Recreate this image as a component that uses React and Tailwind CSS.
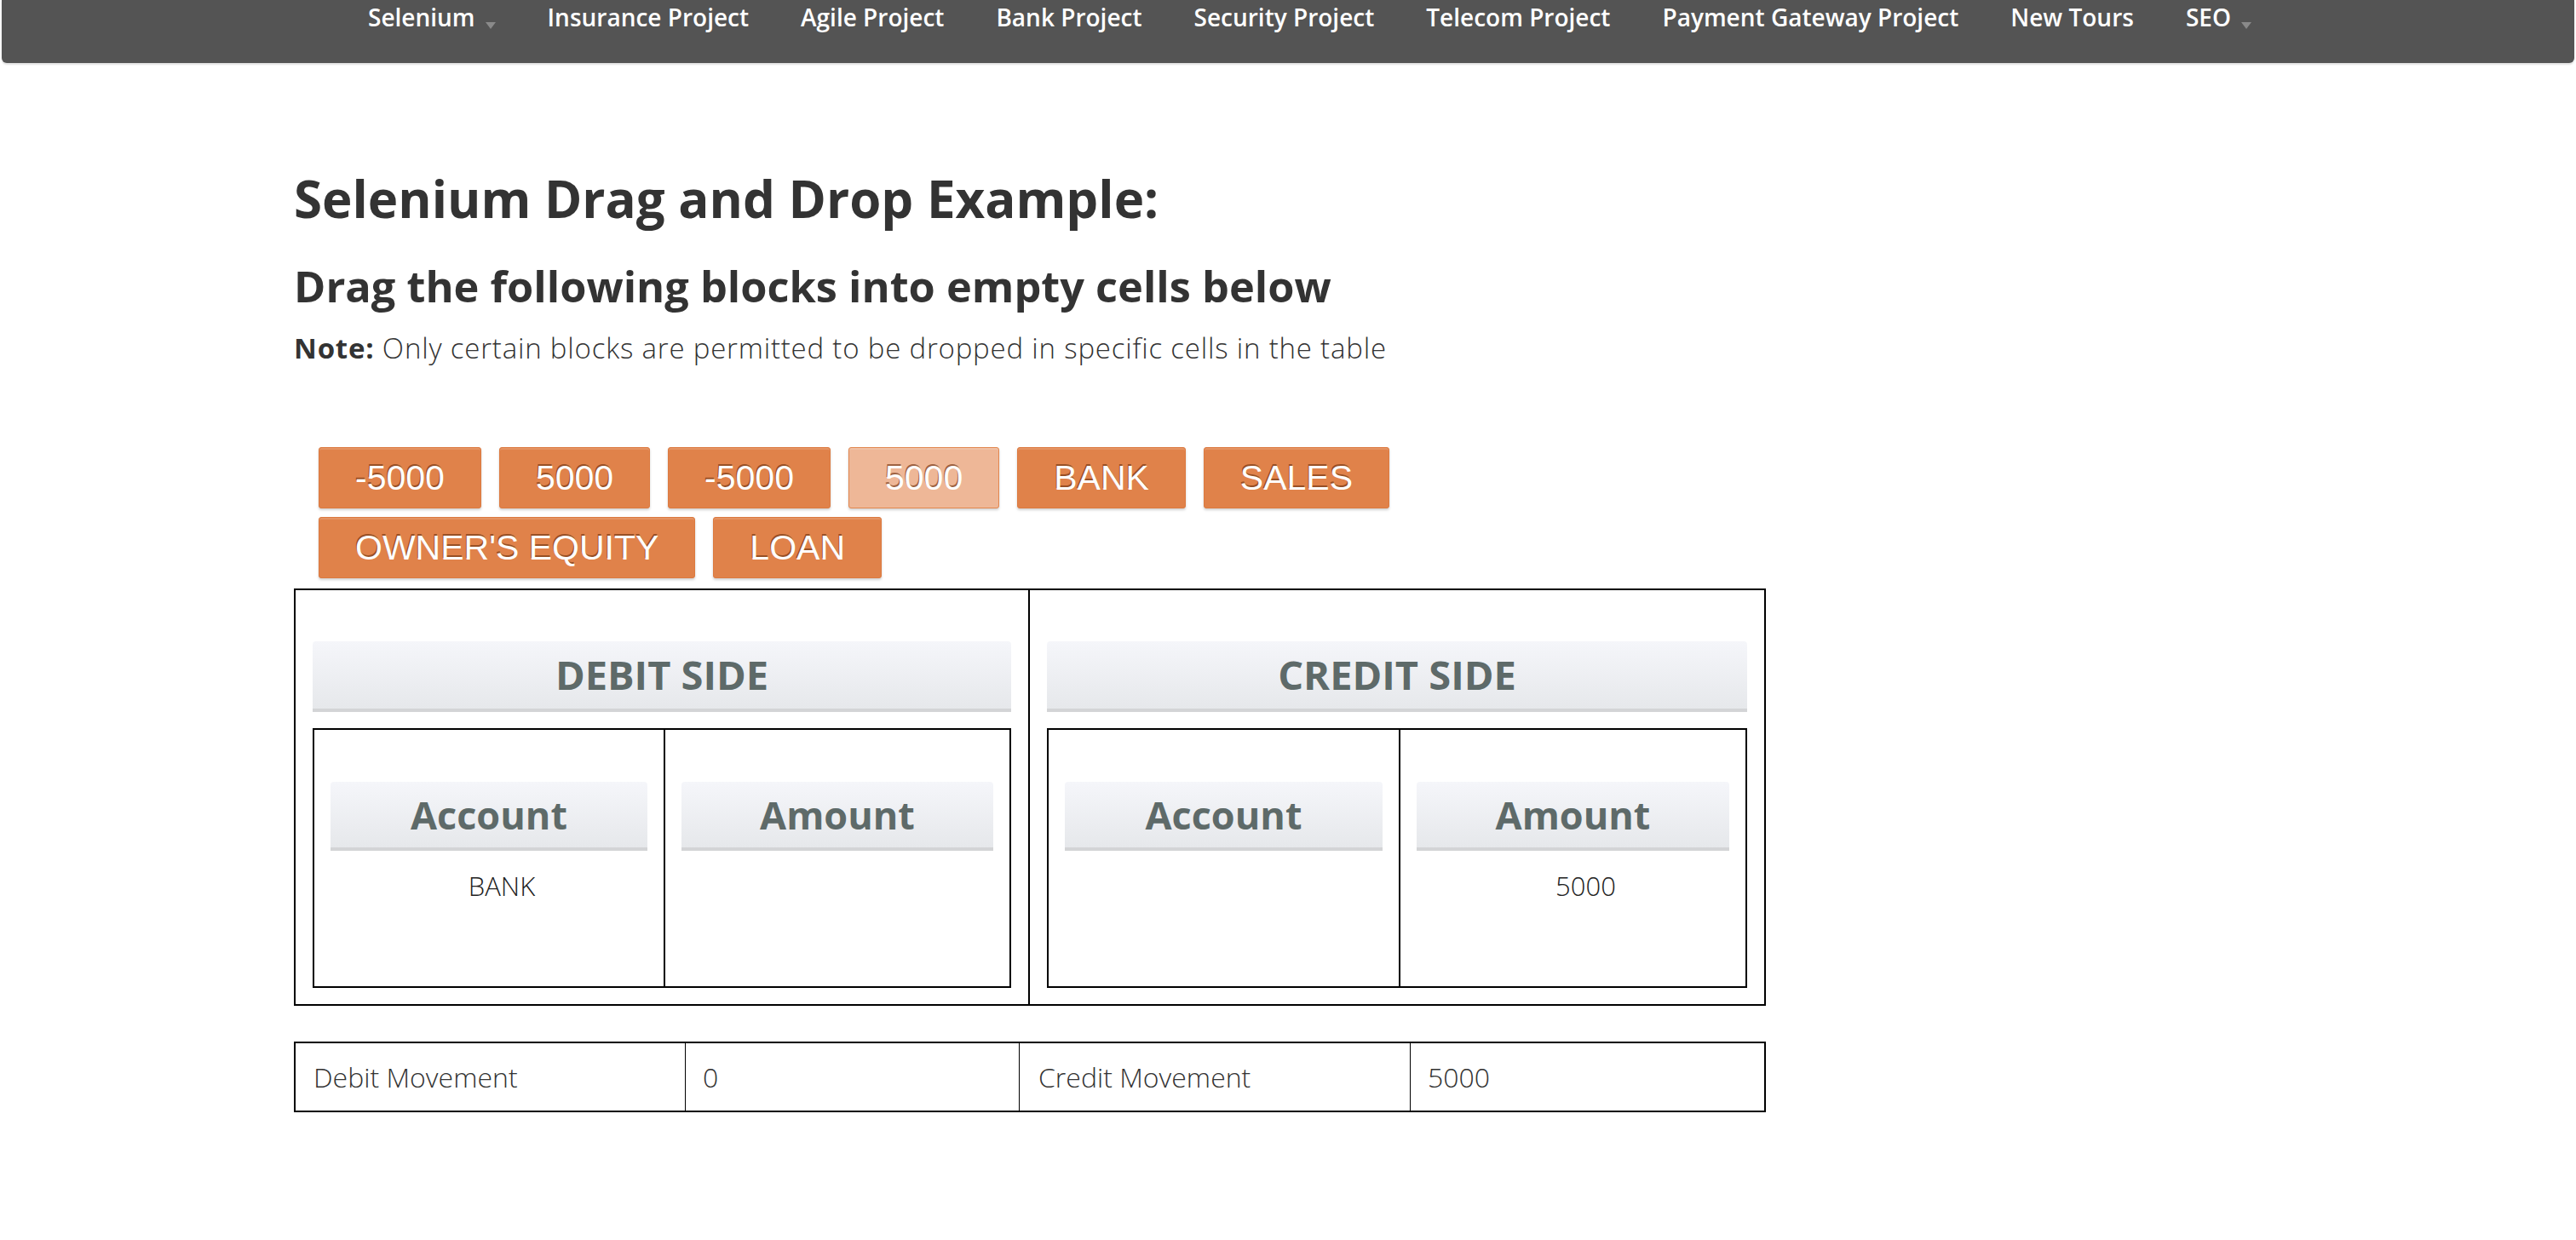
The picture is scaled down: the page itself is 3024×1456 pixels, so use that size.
const navItems = [
  { label: 'Selenium', caret: true },
  { label: 'Insurance Project' },
  { label: 'Agile Project' },
  { label: 'Bank Project' },
  { label: 'Security Project' },
  { label: 'Telecom Project' },
  { label: 'Payment Gateway Project' },
  { label: 'New Tours' },
  { label: 'SEO', caret: true },
];

const rowOne = [
  { label: '-5000' },
  { label: '5000' },
  { label: '-5000' },
  { label: '5000', used: true },
  { label: 'BANK' },
  { label: 'SALES' },
];

const rowTwo = [{ label: "OWNER'S EQUITY" }, { label: 'LOAN' }];

function Block({ label, used }) {
  return (
    <div
      className={
        'flex h-[72px] items-center rounded-[3px] border px-[42px] font-["Liberation_Sans",Arial,sans-serif] text-[41px] leading-none text-white [text-shadow:-1px_-2px_0_rgba(110,50,15,0.65)] shadow-[inset_0_2px_0_rgba(255,255,255,0.14),0_2px_3px_rgba(0,0,0,0.18)] ' +
        (used ? 'border-[#e2874f] bg-[#eeb797]' : 'border-[#dc7a40] bg-[#e0824a]')
      }
    >
      {label}
    </div>
  );
}

function SideHeader({ children }) {
  return (
    <div className="flex h-[83px] items-center justify-center rounded-t-[4px] border-b-[4px] border-[#d3d4d6] bg-linear-to-b from-[#f5f6fa] to-[#e6e8eb] text-[47px] font-bold text-[#5e6a69]">
      {children}
    </div>
  );
}

function ColHeader({ children }) {
  return (
    <div className="flex h-[81px] items-center justify-center rounded-t-[4px] border-b-[4px] border-[#d3d4d6] bg-linear-to-b from-[#f5f6fa] to-[#e6e8eb] text-[45px] font-bold text-[#5e6a69]">
      {children}
    </div>
  );
}

function DropCell({ title, value, last }) {
  return (
    <div className={'px-[19px] pt-[61px] ' + (last ? '' : 'border-r-2 border-black')}>
      <ColHeader>{title}</ColHeader>
      {value && (
        <ul className="mt-[20px] pl-[30px] text-center text-[31px] font-light leading-[42px] text-[#222]">
          <li>{value}</li>
        </ul>
      )}
    </div>
  );
}

function Side({ title, account, amount, last }) {
  return (
    <div className={'px-[20px] pb-[19px] pt-[60px] ' + (last ? '' : 'border-r-2 border-black')}>
      <SideHeader>{title}</SideHeader>
      <div className="mt-[19px] grid h-[305px] grid-cols-[414fr_406fr] border-2 border-black">
        <DropCell title="Account" value={account} />
        <DropCell title="Amount" value={amount} last />
      </div>
    </div>
  );
}

export default function App() {
  return (
    <div className="min-h-screen w-full bg-white font-['Open_Sans',sans-serif] text-[#333]">
      <nav className="mx-[2px] h-[74px] rounded-b-[6px] bg-[#545454] shadow-[0_2px_2px_rgba(0,0,0,0.12)]">
        <ul className="flex items-start gap-[61px] pl-[430px] pt-[4px]">
          {navItems.map((item) => (
            <li key={item.label} className="flex items-start text-[28px] font-semibold leading-[32px] text-white">
              {item.label}
              {item.caret && (
                <span className="ml-[12px] mt-[22px] inline-block h-0 w-0 border-x-[6px] border-t-[8px] border-x-transparent border-t-[#8a8a8a]" />
              )}
            </li>
          ))}
        </ul>
      </nav>

      <main className="ml-[345px] w-[1728px] pb-[120px]">
        <h2 className="mt-[126px] text-[60px] font-bold leading-[66px]">Selenium Drag and Drop Example:</h2>
        <h3 className="mt-[42px] text-[50.5px] font-bold leading-[56px]">Drag the following blocks into empty cells below</h3>
        <p className="mt-[21px] text-[33px] font-light leading-[48px] tracking-[0.8px]">
          <span className="font-bold">Note:</span> Only certain blocks are permitted to be dropped in specific cells in the table
        </p>

        <div className="mt-[92px] flex flex-col gap-[10px] pl-[29px]">
          <div className="flex gap-[21px]">
            {rowOne.map((b, i) => (
              <Block key={i} {...b} />
            ))}
          </div>
          <div className="flex gap-[21px]">
            {rowTwo.map((b, i) => (
              <Block key={i} {...b} />
            ))}
          </div>
        </div>

        <div className="mt-[12px] grid grid-cols-2 border-2 border-black">
          <Side title="DEBIT SIDE" account="BANK" />
          <Side title="CREDIT SIDE" amount="5000" last />
        </div>

        <div className="mt-[42px] grid h-[83px] grid-cols-[457px_392px_459px_1fr] border-2 border-black text-[32px] font-light">
          <div className="flex items-center pl-[21px]">Debit Movement</div>
          <div className="flex items-center border-l border-black pl-[20px]">0</div>
          <div className="flex items-center border-l border-black pl-[22px]">Credit Movement</div>
          <div className="flex items-center border-l border-black pl-[20px]">5000</div>
        </div>
      </main>
    </div>
  );
}
